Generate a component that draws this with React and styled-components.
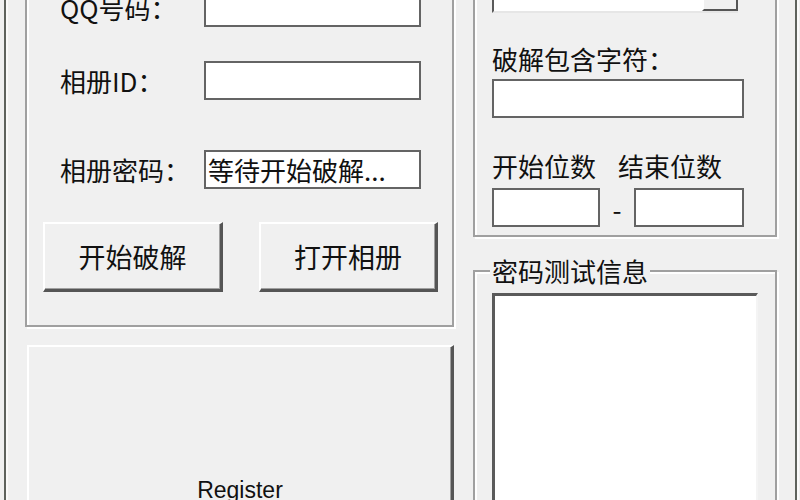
import React from "react";
import styled, { createGlobalStyle } from "styled-components";

const GlobalStyle = createGlobalStyle`
  html, body {
    margin: 0;
    padding: 0;
    background: #f0f0f0;
  }
`;

const Window = styled.div`
  width: 800px;
  height: 500px;
  overflow: hidden;
  display: flex;
  align-items: flex-start;
  background: #f0f0f0;
  font-family: "Noto Sans CJK SC", "Liberation Sans", sans-serif;
  font-size: 26px;
  color: #111;
`;

const Edge = styled.div`
  align-self: stretch;
  flex: none;
  width: 2px;
  background: #5e625c;
  border-right: 2px solid #fafafa;
  margin-left: ${p => p.$left}px;
`;

const Column = styled.div`
  flex: none;
  width: ${p => p.$width}px;
  margin-left: ${p => p.$gap}px;
  margin-top: -40px;
  display: flex;
  flex-direction: column;
`;

const GroupBox = styled.div`
  border: 2px solid #a0a0a0;
  box-shadow: inset 2px 2px 0 #fff, 2px 2px 0 #fff;
  padding: ${p => p.$pad};
`;

const FormRow = styled.div`
  display: grid;
  grid-template-columns: 161px 217px;
  align-items: center;
  margin-top: ${p => p.$top || 0}px;
`;

const Label = styled.label`
  padding-left: 17px;
  line-height: 30px;
  white-space: nowrap;
`;

const Edit = styled.div`
  box-sizing: border-box;
  height: ${p => p.$h || 39}px;
  width: ${p => (p.$w ? `${p.$w}px` : "auto")};
  background: #fff;
  border: 2px solid #646464;
  padding: 0 2px;
  line-height: 35px;
  white-space: nowrap;
  overflow: hidden;
`;

const ButtonRow = styled.div`
  display: flex;
  gap: 36px;
  margin-top: 33px;
`;

const Button = styled.button`
  box-sizing: border-box;
  width: ${p => p.$w}px;
  height: ${p => p.$h}px;
  margin: 0;
  padding: 0;
  background: #f0f0f0;
  border-top: 2px solid #fff;
  border-left: 2px solid #fff;
  border-right: 3px solid #555;
  border-bottom: 3px solid #555;
  box-shadow: inset -1px -1px 0 #a0a0a0;
  font-family: inherit;
  font-size: 27px;
  color: #111;
`;

const RegisterButton = styled(Button)`
  margin: 18px 0 0 2px;
  font-family: "Liberation Sans", Arial, sans-serif;
  font-size: 23px;
  display: flex;
  align-items: flex-end;
  justify-content: center;
  padding-bottom: 128px;
`;

const Combo = styled.div`
  display: flex;
  box-sizing: border-box;
  width: 246px;
  height: 39px;
  background: #fff;
  border-top: 2px solid #5a5a5a;
  border-left: 2px solid #5a5a5a;
  border-bottom: 2px solid #e6e6e6;
  justify-content: flex-end;
`;

const DropButton = styled.div`
  box-sizing: border-box;
  width: 36px;
  height: 35px;
  background: #f0f0f0;
  border-top: 2px solid #fff;
  border-left: 2px solid #fff;
  border-right: 2px solid #555;
  border-bottom: 2px solid #555;
  display: flex;
  align-items: center;
  justify-content: center;
`;

const Caption = styled.div`
  line-height: 30px;
  margin-top: ${p => p.$top}px;
  margin-bottom: ${p => p.$bottom}px;
  display: flex;
  gap: 22px;
  white-space: nowrap;
`;

const RangeRow = styled.div`
  display: grid;
  grid-template-columns: 108px 34px 110px;
  align-items: center;
`;

const Dash = styled.span`
  text-align: center;
  line-height: 30px;
  padding-top: 2px;
`;

const Fieldset = styled.fieldset`
  margin: 19px 0 0;
  padding: 7px 17px 0 17px;
  min-width: 0;
  border: 2px solid #a0a0a0;
  box-shadow: inset 2px 2px 0 #fff, 2px 2px 0 #fff;
`;

const Legend = styled.legend`
  padding: 0 2px;
  margin-left: -2px;
  line-height: 30px;
  background: #f0f0f0;
`;

const ListBox = styled.div`
  height: 260px;
  background: #fff;
  border-top: 3px solid #5a5a5a;
  border-left: 3px solid #5a5a5a;
  border-right: 2px solid #f4f4f4;
`;

export default function App() {
  return (
    <>
      <GlobalStyle />
      <Window>
        <Edge $left={4} />
        <Column $width={429} $gap={17}>
          <GroupBox $pad="26px 14px 33px 16px">
            <FormRow>
              <Label>QQ号码：</Label>
              <Edit />
            </FormRow>
            <FormRow $top={34}>
              <Label>相册ID：</Label>
              <Edit />
            </FormRow>
            <FormRow $top={50}>
              <Label>相册密码：</Label>
              <Edit>等待开始破解...</Edit>
            </FormRow>
            <ButtonRow>
              <Button $w={180} $h={70}>开始破解</Button>
              <Button $w={179} $h={70}>打开相册</Button>
            </ButtonRow>
          </GroupBox>
          <RegisterButton $w={427} $h={290}>Register</RegisterButton>
        </Column>
        <Column $width={304} $gap={19}>
          <GroupBox $pad="12px 31px 8px 17px">
            <Combo>
              <DropButton>
                <svg width="12" height="7" viewBox="0 0 12 7">
                  <path d="M0 0h12L6 7z" fill="#111" />
                </svg>
              </DropButton>
            </Combo>
            <Caption $top={31} $bottom={5}>破解包含字符：</Caption>
            <Edit $w={252} />
            <Caption $top={33} $bottom={7}>
              <span>开始位数</span>
              <span>结束位数</span>
            </Caption>
            <RangeRow>
              <Edit />
              <Dash>-</Dash>
              <Edit />
            </RangeRow>
          </GroupBox>
          <Fieldset>
            <Legend>密码测试信息</Legend>
            <ListBox />
          </Fieldset>
        </Column>
        <Edge $left={18} />
      </Window>
    </>
  );
}
